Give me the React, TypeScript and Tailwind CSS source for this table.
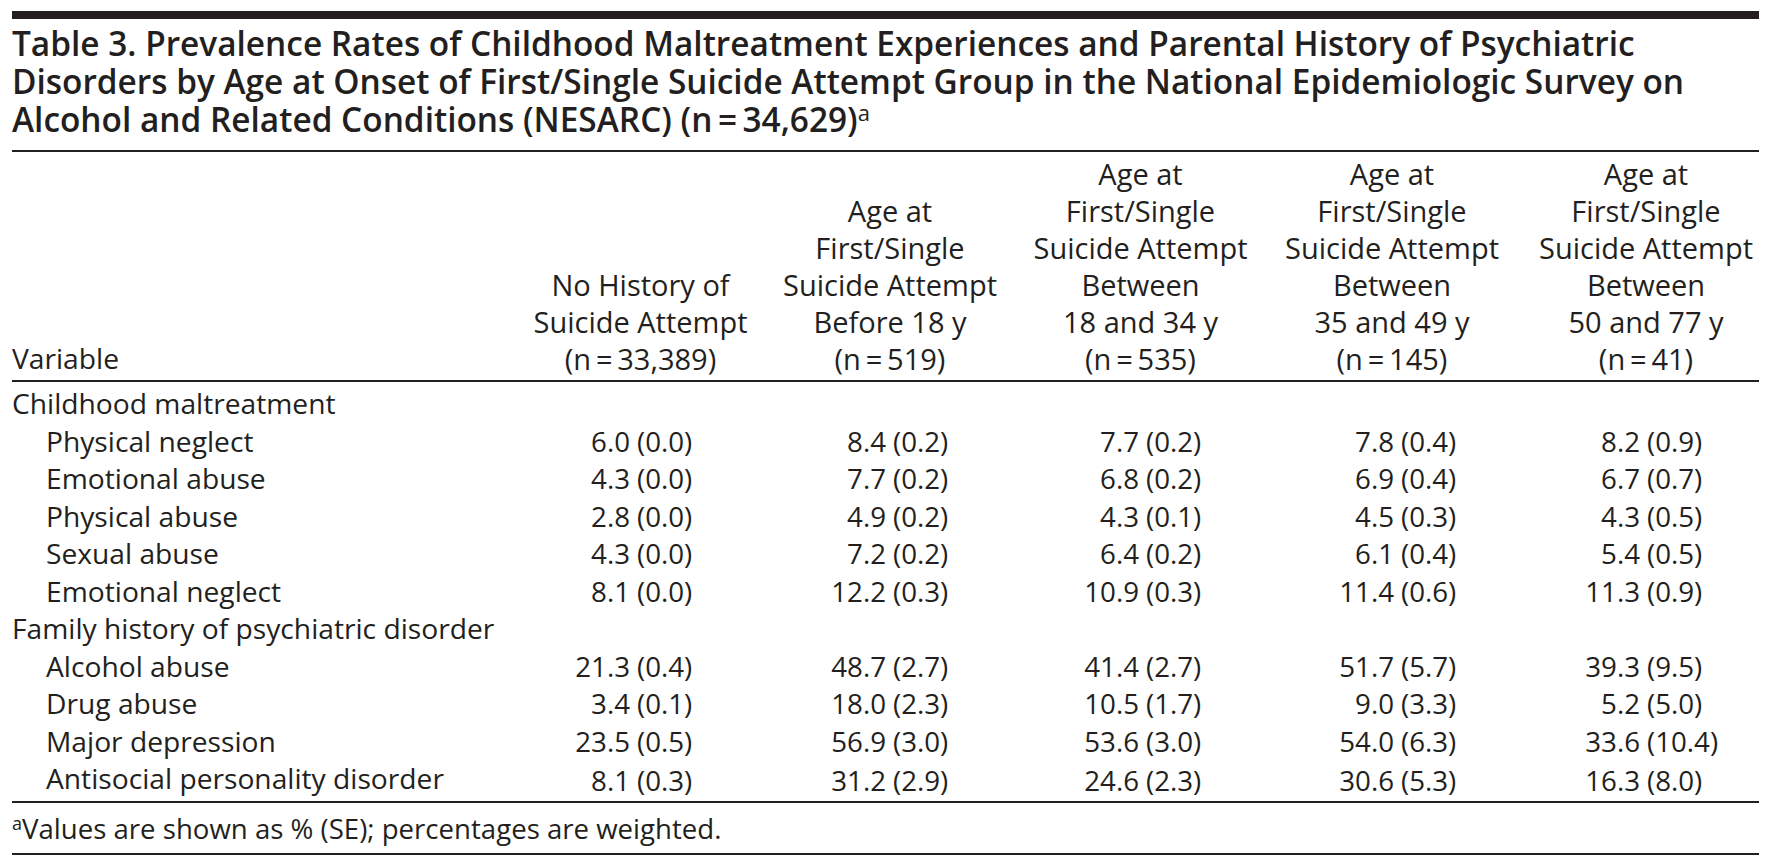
import React from "react"

type Value = [string, string]

interface Row {
  label: string
  group?: boolean
  values?: Value[]
}

const rows: Row[] = [
  { label: "Childhood maltreatment", group: true },
  { label: "Physical neglect", values: [["6.0", "0.0"], ["8.4", "0.2"], ["7.7", "0.2"], ["7.8", "0.4"], ["8.2", "0.9"]] },
  { label: "Emotional abuse", values: [["4.3", "0.0"], ["7.7", "0.2"], ["6.8", "0.2"], ["6.9", "0.4"], ["6.7", "0.7"]] },
  { label: "Physical abuse", values: [["2.8", "0.0"], ["4.9", "0.2"], ["4.3", "0.1"], ["4.5", "0.3"], ["4.3", "0.5"]] },
  { label: "Sexual abuse", values: [["4.3", "0.0"], ["7.2", "0.2"], ["6.4", "0.2"], ["6.1", "0.4"], ["5.4", "0.5"]] },
  { label: "Emotional neglect", values: [["8.1", "0.0"], ["12.2", "0.3"], ["10.9", "0.3"], ["11.4", "0.6"], ["11.3", "0.9"]] },
  { label: "Family history of psychiatric disorder", group: true },
  { label: "Alcohol abuse", values: [["21.3", "0.4"], ["48.7", "2.7"], ["41.4", "2.7"], ["51.7", "5.7"], ["39.3", "9.5"]] },
  { label: "Drug abuse", values: [["3.4", "0.1"], ["18.0", "2.3"], ["10.5", "1.7"], ["9.0", "3.3"], ["5.2", "5.0"]] },
  { label: "Major depression", values: [["23.5", "0.5"], ["56.9", "3.0"], ["53.6", "3.0"], ["54.0", "6.3"], ["33.6", "10.4"]] },
  { label: "Antisocial personality disorder", values: [["8.1", "0.3"], ["31.2", "2.9"], ["24.6", "2.3"], ["30.6", "5.3"], ["16.3", "8.0"]] },
]

const headers: string[][] = [
  ["No History of", "Suicide Attempt", "(n\u2009=\u200933,389)"],
  ["Age at", "First/Single", "Suicide Attempt", "Before 18 y", "(n\u2009=\u2009519)"],
  ["Age at", "First/Single", "Suicide Attempt", "Between", "18 and 34 y", "(n\u2009=\u2009535)"],
  ["Age at", "First/Single", "Suicide Attempt", "Between", "35 and 49 y", "(n\u2009=\u2009145)"],
  ["Age at", "First/Single", "Suicide Attempt", "Between", "50 and 77 y", "(n\u2009=\u200941)"],
]

// left padding of each value column so the "(" lines up like the print layout
const valuePad = ["pl-[58px]", "pl-[65px]", "pl-[68px]", "pl-[72px]", "pl-[66px]"]
const headPad = ["", "", "", "", "pl-[15px]"]

export default function App() {
  return (
    <div className="min-h-screen bg-white pl-[12px] pr-[13px] pt-[11px] text-[#231f20] font-['Open_Sans',sans-serif]">
      <div className="h-[8px] bg-[#231f20]" />
      <h1 className="mt-[5px] whitespace-nowrap text-[33.4px] font-semibold leading-[38px]">
        Table 3. Prevalence Rates of Childhood Maltreatment Experiences and Parental History of Psychiatric
        <br />
        Disorders by Age at Onset of First/Single Suicide Attempt Group in the National Epidemiologic Survey on
        <br />
        Alcohol and Related Conditions (NESARC) (n{"\u2009=\u2009"}34,629)
        <sup className="text-[22px] font-normal">a</sup>
      </h1>

      <table className="mt-[12px] w-full table-fixed border-collapse text-[28.2px]">
        <colgroup>
          <col className="w-[504px]" />
          <col className="w-[249px]" />
          <col className="w-[250px]" />
          <col className="w-[251px]" />
          <col className="w-[252px]" />
          <col className="w-[241px]" />
        </colgroup>
        <thead className="border-y-2 border-[#231f20]">
          <tr>
            <th className="pt-[3px] pb-[3px] text-left align-bottom font-normal leading-[37px]">Variable</th>
            {headers.map((lines, i) => (
              <th
                key={i}
                className={`pt-[3px] pb-[3px] text-center align-bottom text-[29px] font-normal leading-[37px] ${headPad[i]}`}
              >
                {lines.map((line) => (
                  <div key={line} className="whitespace-nowrap">{line}</div>
                ))}
              </th>
            ))}
          </tr>
        </thead>
        <tbody className="border-b-2 border-[#231f20]">
          {rows.map((row, r) => (
            <tr key={row.label}>
              <td
                className={`whitespace-nowrap leading-[37.5px] ${row.group ? "" : "pl-[34px]"} ${r === 0 ? "pt-[3px]" : ""} ${
                  r === rows.length - 1 ? "pb-[3px]" : ""
                }`}
              >
                {row.label}
              </td>
              {row.values
                ? row.values.map(([est, se], i) => (
                    <td key={i} className={`text-[27.7px] leading-[37.5px] ${valuePad[i]}`}>
                      <div className="flex whitespace-nowrap">
                        <span className="w-[56px] text-right">{est}</span>
                        <span className="pl-[7px]">({se})</span>
                      </div>
                    </td>
                  ))
                : headers.map((_, i) => <td key={i} />)}
            </tr>
          ))}
        </tbody>
      </table>

      <p className="border-b-2 border-[#231f20] pt-[10px] pb-[10px] text-[27.6px] leading-[30px]">
        <sup className="text-[18px]">a</sup>Values are shown as % (SE); percentages are weighted.
      </p>
    </div>
  )
}
